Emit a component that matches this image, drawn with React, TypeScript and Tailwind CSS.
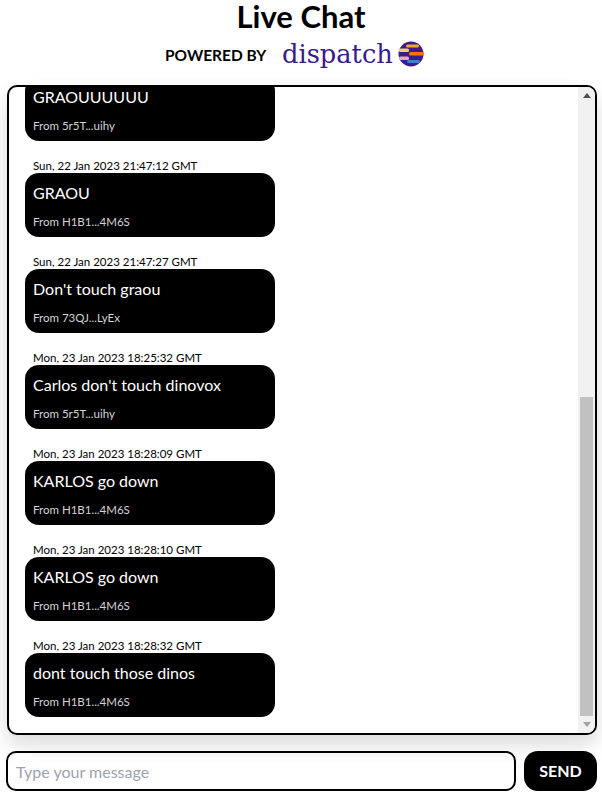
const font = "[font-family:'Lato','Noto_Sans',sans-serif]";

const messages = [
  { time: "Sun, 22 Jan 2023 21:47:12 GMT", text: "GRAOU", from: "H1B1...4M6S" },
  { time: "Sun, 22 Jan 2023 21:47:27 GMT", text: "Don't touch graou", from: "73QJ...LyEx" },
  { time: "Mon, 23 Jan 2023 18:25:32 GMT", text: "Carlos don't touch dinovox", from: "5r5T...uihy" },
  { time: "Mon, 23 Jan 2023 18:28:09 GMT", text: "KARLOS go down", from: "H1B1...4M6S" },
  { time: "Mon, 23 Jan 2023 18:28:10 GMT", text: "KARLOS go down", from: "H1B1...4M6S" },
  { time: "Mon, 23 Jan 2023 18:28:32 GMT", text: "dont touch those dinos", from: "H1B1...4M6S" },
];

function Bubble({ text, from, className }: { text: string; from: string; className: string }) {
  return (
    <div className={`w-[250px] bg-black text-white rounded-[14px] px-2 flex flex-col ${className}`}>
      <div className="text-[16px] leading-[22px] pt-[9px]">{text}</div>
      <div className="text-[11.5px] leading-[16px] mt-[10px] text-[#d4d4d4]">From {from}</div>
    </div>
  );
}

function Logo() {
  return (
    <svg width="26" height="26" viewBox="0 0 26 26">
      <circle cx="13" cy="13" r="12.5" fill="#3a1a8c" />
      <rect x="8" y="3.5" width="13" height="3" rx="1.5" fill="#f5a623" />
      <rect x="1" y="7.5" width="10" height="3.5" rx="1.5" fill="#f5d061" />
      <rect x="11" y="11" width="15" height="3.5" rx="1.5" fill="#f97316" />
      <rect x="1" y="15.5" width="10" height="3.5" rx="1.5" fill="#f5a3a3" />
      <rect x="9" y="19" width="13" height="3" rx="1.5" fill="#3b82c4" />
    </svg>
  );
}

export default function App() {
  return (
    <div className={`w-[602px] h-[796px] bg-white overflow-hidden flex flex-col text-black ${font}`}>
      <h1 className="text-[31px] leading-[33px] font-bold text-center">Live Chat</h1>
      <div className="h-[52px] flex items-start pl-[165px]">
        <span className="w-[117px] text-[15.5px] leading-[20px] font-bold mt-[12px]">POWERED BY</span>
        <span className="w-[116px] text-[25.7px] leading-[38px] mt-[2px] text-[#3a1a8c] font-['DejaVu_Serif',serif]">dispatch</span>
        <div className="mt-[8px]"><Logo /></div>
      </div>
      <div className="mx-[7px] w-[590px] h-[650px] shrink-0 border-2 border-black rounded-[10px] shadow-[0_10px_20px_rgba(0,0,0,0.14)] overflow-hidden flex bg-white">
        <div className="flex-1 overflow-hidden pl-[16px]">
          <Bubble text="GRAOUUUUUU" from="5r5T...uihy" className="-mt-[10px] h-[64px]" />
          {messages.map((m) => (
            <div key={m.time} className="mt-[17px]">
              <div className="pl-2 text-[11.5px] leading-[15px] h-[15px]">{m.time}</div>
              <Bubble text={m.text} from={m.from} className="h-[64px]" />
            </div>
          ))}
        </div>
        <div className="w-[17px] shrink-0 bg-[#f1f1f1] flex flex-col">
          <div className="h-[17px] flex items-center justify-center">
            <svg width="8" height="5" viewBox="0 0 8 5"><path d="M4 0 8 5H0Z" fill="#505050" /></svg>
          </div>
          <div className="flex-1 flex flex-col justify-end items-center">
            <div className="w-[13px] h-[319px] bg-[#c1c1c1]" />
          </div>
          <div className="h-[17px] flex items-center justify-center">
            <svg width="8" height="5" viewBox="0 0 8 5"><path d="M0 0H8L4 5Z" fill="#a3a3a3" /></svg>
          </div>
        </div>
      </div>
      <div className="flex mt-[16px] pl-[6px] gap-[8px]">
        <input
          placeholder="Type your message"
          className={`w-[510px] h-[40px] border-2 border-black rounded-[10px] px-2 text-[16px] outline-none placeholder:text-[#9ca3af] ${font}`}
        />
        <button className="w-[73px] h-[40px] bg-black text-white rounded-[14px] font-bold text-[16px]">SEND</button>
      </div>
    </div>
  );
}
